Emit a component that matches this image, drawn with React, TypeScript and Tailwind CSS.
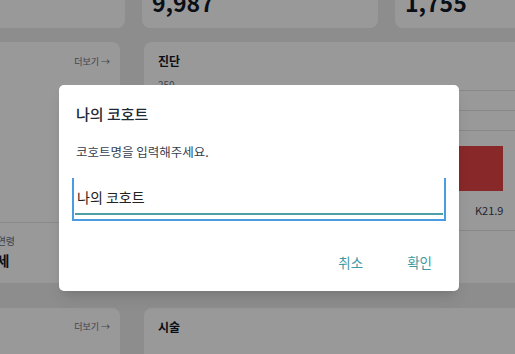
const font = { fontFamily: '"Noto Sans CJK KR", "Noto Sans", sans-serif' };

function TopCard({ w, value }: { w: string; value?: string }) {
  return (
    <div className={`${w} h-[68px] shrink-0 rounded-lg bg-white flex items-end px-[10px] pb-[14px]`}>
      {value && <span className="text-[23px] font-semibold leading-none text-[#111827]">{value}</span>}
    </div>
  );
}

export default function App() {
  return (
    <div className="relative w-[515px] h-[354px] overflow-hidden bg-[#ececec]" style={font}>
      {/* dashboard behind */}
      <div className="flex flex-col">
        <div className="flex gap-[17px] mt-[-40px] ml-[-60px]">
          <TopCard w="w-[185px]" />
          <TopCard w="w-[236px]" value="9,987" />
          <TopCard w="w-[236px]" value="1,755" />
        </div>

        <div className="flex gap-[24px] mt-[14px] ml-[-60px]">
          <div className="w-[180px] h-[241px] shrink-0 rounded-lg bg-white flex flex-col">
            <div className="flex justify-end pr-[10px] pt-[13px] text-[9px] text-[#6b7280]">더보기 →</div>
            <div className="flex-1" />
            <div className="border-t border-[#e5e7eb] pt-[10px] pb-[12px]">
              <div className="pl-[36px] text-[10px] text-[#6b7280]">성별 연령</div>
              <div className="pl-[40px] text-[14px] font-bold text-[#111827] mt-[2px]">45세</div>
            </div>
          </div>

          <div className="w-[400px] h-[241px] shrink-0 rounded-lg bg-white flex flex-col pl-[14px]">
            <div className="pt-[10px] text-[12px] font-semibold text-[#111827]">진단</div>
            <div className="text-[10px] text-[#6b7280] mt-[10px] leading-none">250</div>
            <div className="mt-[0px] border-t border-[#e3e3e3] h-[20px]" />
            <div className="border-t border-[#e3e3e3] h-[20px]" />
            <div className="border-t border-[#e3e3e3] h-[16px]" />
            <div className="flex">
              <div className="w-[245px]" />
              <div className="w-[100px] h-[45px] bg-[#e54444]" />
            </div>
            <div className="flex h-[39px] items-center">
              <div className="w-[317px]" />
              <span className="text-[11px] text-[#374151]">K21.9</span>
            </div>
            <div className="border-t border-[#e3e3e3]" />
          </div>
        </div>

        <div className="flex gap-[24px] mt-[25px] ml-[-60px]">
          <div className="w-[180px] h-[80px] shrink-0 rounded-lg bg-white flex justify-end pr-[10px] pt-[12px] text-[9px] text-[#6b7280]">
            더보기 →
          </div>
          <div className="w-[400px] h-[80px] shrink-0 rounded-lg bg-white pl-[14px] pt-[10px] text-[12px] font-semibold text-[#111827]">
            시술
          </div>
        </div>
      </div>

      {/* overlay */}
      <div className="absolute inset-0 bg-black/40" />

      {/* dialog */}
      <div className="absolute left-[59px] top-[85px] w-[400px] h-[206px] rounded-[5px] bg-white shadow-lg flex flex-col">
        <div className="pl-[17px] pt-[17px] text-[15px] font-medium leading-[24px] text-[#1f2937]">나의 코호트</div>
        <div className="pl-[17px] mt-[16px] text-[12.5px] leading-[20px] text-[#374151]">코호트명을 입력해주세요.</div>
        <div className="ml-[13px] mt-[16px] w-[374px] h-[43px] border-x-2 border-b-2 border-[#4a9be0] px-[1px] pb-[4px] flex flex-col justify-end">
          <div className="border-b-2 border-[#4e9ea8] pl-[2px] pb-[6px] text-[14px] leading-[20px] text-[#222]">나의 코호트</div>
        </div>
        <div className="flex justify-end gap-[44px] pr-[27px] mt-[31px] text-[13.5px] text-[#3f9aa2]">
          <span>취소</span>
          <span>확인</span>
        </div>
      </div>
    </div>
  );
}
